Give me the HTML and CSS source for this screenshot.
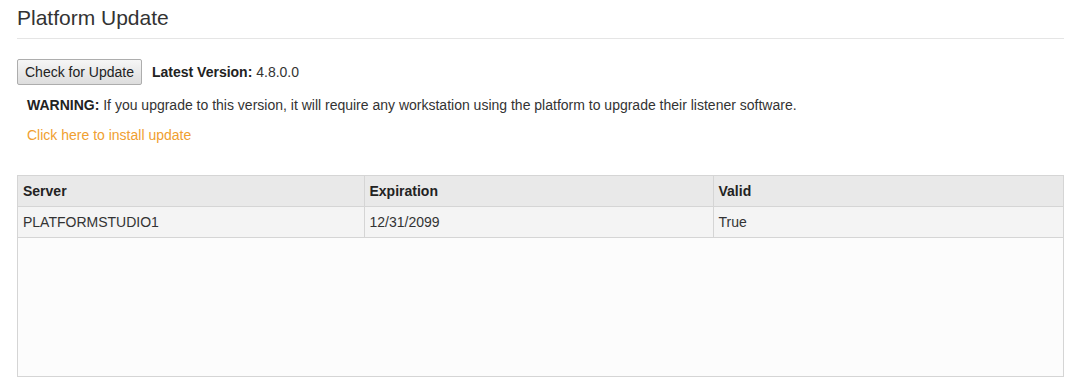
FILE: index.html
```html
<!DOCTYPE html>
<html>
<head>
<meta charset="utf-8">
<link rel="stylesheet" href="styles.css">
</head>
<body>
<div class="page">
  <h1 class="title">Platform Update</h1>
  <div class="toolbar">
    <button class="btn" type="button">Check for Update</button>
    <span class="version"><b>Latest Version:</b> 4.8.0.0</span>
  </div>
  <p class="warning"><b>WARNING:</b> If you upgrade to this version, it will require any workstation using the platform to upgrade their listener software.</p>
  <p class="install"><a class="link" href="#">Click here to install update</a></p>
  <div class="grid">
    <table class="tbl">
      <colgroup>
        <col class="c1">
        <col class="c2">
        <col class="c3">
      </colgroup>
      <thead>
        <tr><th>Server</th><th>Expiration</th><th>Valid</th></tr>
      </thead>
      <tbody>
        <tr><td>PLATFORMSTUDIO1</td><td>12/31/2099</td><td>True</td></tr>
      </tbody>
    </table>
  </div>
</div>
</body>
</html>
```
FILE: styles.css
```css
html, body {
  margin: 0;
  background: #ffffff;
}
body {
  font-family: "Liberation Sans", Arial, sans-serif;
  color: #333333;
}
.page {
  padding: 0 12px 0 17px;
}
.title {
  margin: 0;
  padding: 7px 0 9px;
  font-size: 21px;
  line-height: 22px;
  font-weight: normal;
  color: #333333;
  border-bottom: 1px solid #e5e5e5;
}
.toolbar {
  margin-top: 20px;
  display: flex;
  align-items: center;
  gap: 10px;
  font-size: 14px;
}
.btn {
  font-family: "Liberation Sans", Arial, sans-serif;
  font-size: 14px;
  line-height: 24px;
  height: 26px;
  padding: 0 7px;
  margin: 0;
  border: 1px solid #adadad;
  border-radius: 2px;
  background: linear-gradient(#f6f6f6, #dddddd);
  color: #222222;
}
.version b {
  color: #222222;
}
.warning {
  margin: 11px 0 0;
  padding-left: 10px;
  font-size: 14px;
  line-height: 18px;
}
.warning b {
  color: #222222;
}
.install {
  margin: 12px 0 0;
  padding-left: 10px;
  font-size: 14px;
  line-height: 18px;
}
.link {
  color: #f0a030;
  text-decoration: none;
}
.grid {
  margin-top: 31px;
  height: 200px;
  border: 1px solid #d5d5d5;
  background: #fcfcfc;
}
.tbl {
  width: 100%;
  border-collapse: collapse;
  table-layout: fixed;
  font-size: 14px;
}
.c1 { width: 346px; }
.c2 { width: 349px; }
.tbl th, .tbl td {
  height: 30px;
  padding: 0 5px;
  line-height: 30px;
  text-align: left;
  border-bottom: 1px solid #d5d5d5;
  border-left: 1px solid #d5d5d5;
  box-sizing: border-box;
  white-space: nowrap;
}
.tbl th:first-child, .tbl td:first-child {
  border-left: none;
}
.tbl th {
  background: #e9e9e9;
  font-weight: bold;
  color: #222222;
}
.tbl td {
  background: #f4f4f4;
  color: #333333;
}
```
